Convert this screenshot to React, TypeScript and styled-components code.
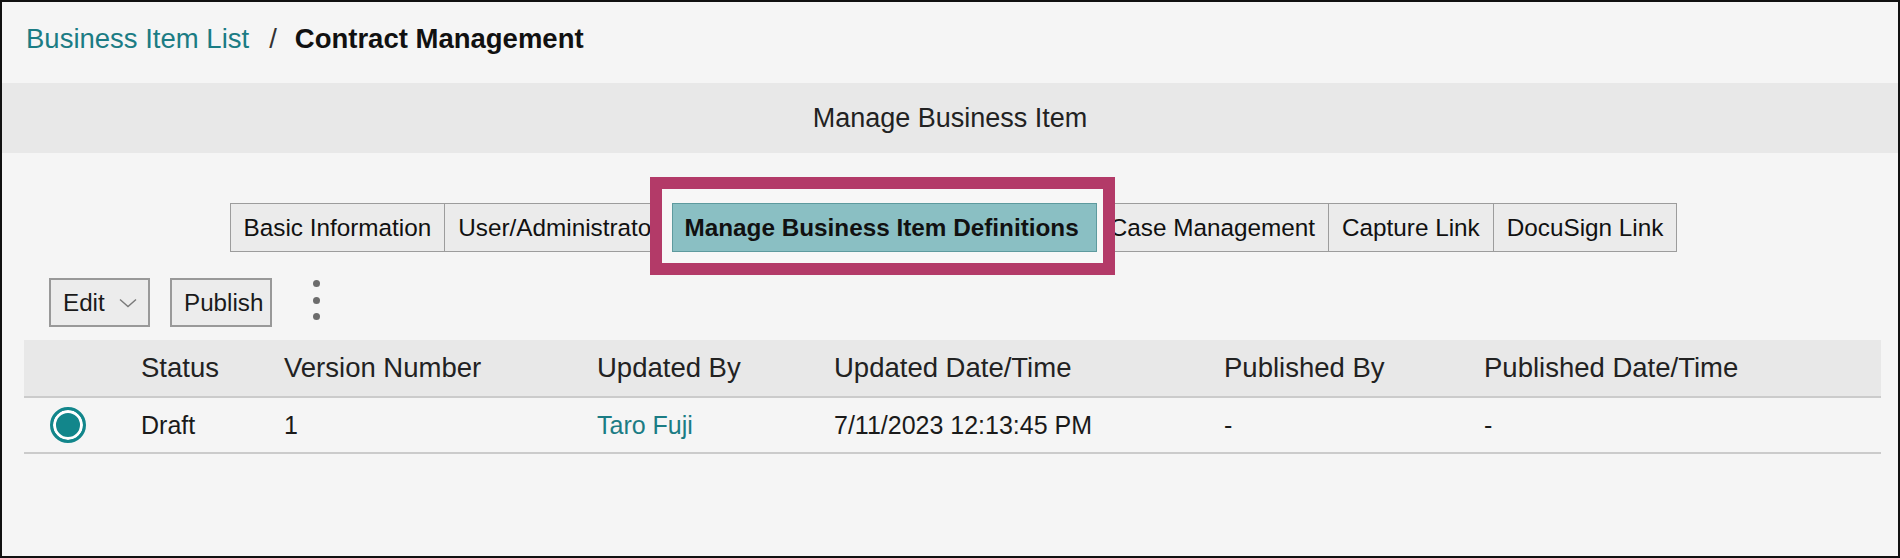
import styled, { createGlobalStyle } from "styled-components";

const GlobalStyle = createGlobalStyle`
  html, body {
    margin: 0;
    padding: 0;
    background: #f5f5f5;
  }
  body {
    font-family: "Liberation Sans", Arial, sans-serif;
    color: #1a1a1a;
  }
`;

const tabs = [
  { label: "Basic Information" },
  { label: "User/Administrator" },
  { label: "Manage Business Item Definitions", active: true },
  { label: "Case Management" },
  { label: "Capture Link" },
  { label: "DocuSign Link" },
];

const columns = [
  "",
  "Status",
  "Version Number",
  "Updated By",
  "Updated Date/Time",
  "Published By",
  "Published Date/Time",
];

function App() {
  return (
    <>
      <GlobalStyle />
      <Frame>
        <Breadcrumb>
          <CrumbLink>Business Item List</CrumbLink>
          <CrumbSep>/</CrumbSep>
          <CrumbCurrent>Contract Management</CrumbCurrent>
        </Breadcrumb>

        <TitleBar>Manage Business Item</TitleBar>

        <TabRow>
          {tabs.map((t) =>
            t.active ? (
              <Highlight key={t.label}>
                <Tab $active>{t.label}</Tab>
              </Highlight>
            ) : (
              <Tab key={t.label}>{t.label}</Tab>
            )
          )}
        </TabRow>

        <Toolbar>
          <ToolButton $width={101}>
            Edit
            <svg width="18" height="10" viewBox="0 0 18 10">
              <polyline
                points="1,1.5 9,8.5 17,1.5"
                fill="none"
                stroke="#7a7a7a"
                strokeWidth="1.4"
              />
            </svg>
          </ToolButton>
          <ToolButton $width={102}>Publish</ToolButton>
          <Kebab>
            <Dot />
            <Dot />
            <Dot />
          </Kebab>
        </Toolbar>

        <Table>
          <HeadRow>
            {columns.map((c, i) => (
              <Cell key={i}>{c}</Cell>
            ))}
          </HeadRow>
          <DataRow>
            <Cell>
              <Radio />
            </Cell>
            <Cell>Draft</Cell>
            <Cell>1</Cell>
            <Cell>
              <UserLink>Taro Fuji</UserLink>
            </Cell>
            <Cell>7/11/2023 12:13:45 PM</Cell>
            <Cell>-</Cell>
            <Cell>-</Cell>
          </DataRow>
        </Table>
      </Frame>
    </>
  );
}

const Frame = styled.div`
  width: 1900px;
  height: 558px;
  box-sizing: border-box;
  border: 2px solid #111;
  background: #f5f5f5;
  display: flex;
  flex-direction: column;
`;

const Breadcrumb = styled.div`
  height: 81px;
  box-sizing: border-box;
  padding: 0 0 7px 24px;
  display: flex;
  align-items: center;
  font-size: 27.5px;
`;

const CrumbLink = styled.span`
  color: #1b7c84;
`;

const CrumbSep = styled.span`
  color: #333;
  margin: 0 18px 0 20px;
`;

const CrumbCurrent = styled.span`
  color: #111;
  font-weight: bold;
`;

const TitleBar = styled.div`
  height: 70px;
  background: #e8e8e8;
  display: flex;
  align-items: center;
  justify-content: center;
  font-size: 27px;
  color: #222;
`;

const TabRow = styled.div`
  margin-top: 50px;
  padding-left: 8px;
  display: flex;
  justify-content: center;
`;

const Tab = styled.div<{ $active?: boolean }>`
  position: relative;
  z-index: 1;
  height: 49px;
  box-sizing: border-box;
  padding: 0 ${(p) => (p.$active ? "17px" : "13px")} 0 ${(p) => (p.$active ? "11px" : "13px")};
  margin-left: -1px;
  display: flex;
  align-items: center;
  white-space: nowrap;
  font-size: 24.3px;
  color: #111;
  font-weight: ${(p) => (p.$active ? "bold" : "normal")};
  background: ${(p) => (p.$active ? "#8abfc3" : "#ebebeb")};
  border: 1px solid ${(p) => (p.$active ? "#5e9a9e" : "#9c9c9c")};
`;

const Highlight = styled.div`
  position: relative;
  z-index: 2;
  display: flex;

  &::before {
    content: "";
    position: absolute;
    top: -26px;
    bottom: -23px;
    left: -23px;
    right: -18px;
    border: 12px solid #b33a68;
    background: #f7f7f7;
    z-index: 0;
  }
`;

const Toolbar = styled.div`
  margin-top: 26px;
  padding-left: 47px;
  display: flex;
  align-items: flex-start;
  gap: 20px;
`;

const ToolButton = styled.div<{ $width: number }>`
  width: ${(p) => p.$width}px;
  height: 49px;
  box-sizing: border-box;
  border: 2px solid #999;
  background: #ececec;
  padding: 0 11px 0 12px;
  display: flex;
  align-items: center;
  justify-content: space-between;
  font-size: 24.2px;
  color: #1a1a1a;
`;

const Kebab = styled.div`
  margin: 2px 0 0 21px;
  display: flex;
  flex-direction: column;
  gap: 9.5px;
`;

const Dot = styled.span`
  width: 7px;
  height: 7px;
  border-radius: 50%;
  background: #6c6c6c;
`;

const Table = styled.div`
  margin: 13px 17px 0 22px;
`;

const gridCols = "117px 143px 313px 237px 390px 260px 1fr";

const HeadRow = styled.div`
  display: grid;
  grid-template-columns: ${gridCols};
  height: 58px;
  box-sizing: border-box;
  background: #e8e8e8;
  border-bottom: 2px solid #cbcbcb;
  font-size: 27.5px;
  color: #222;
`;

const DataRow = styled.div`
  display: grid;
  grid-template-columns: ${gridCols};
  height: 56px;
  box-sizing: border-box;
  border-bottom: 2px solid #cbcbcb;
  font-size: 25px;
  color: #1a1a1a;
`;

const Cell = styled.div`
  display: flex;
  align-items: center;
  white-space: nowrap;
`;

const Radio = styled.span`
  margin-left: 26px;
  width: 36px;
  height: 36px;
  box-sizing: border-box;
  border-radius: 50%;
  border: 3px solid #12868b;
  background: #12868b;
  box-shadow: inset 0 0 0 3px #fff;
`;

const UserLink = styled.span`
  color: #1b7c84;
`;

export default App;
